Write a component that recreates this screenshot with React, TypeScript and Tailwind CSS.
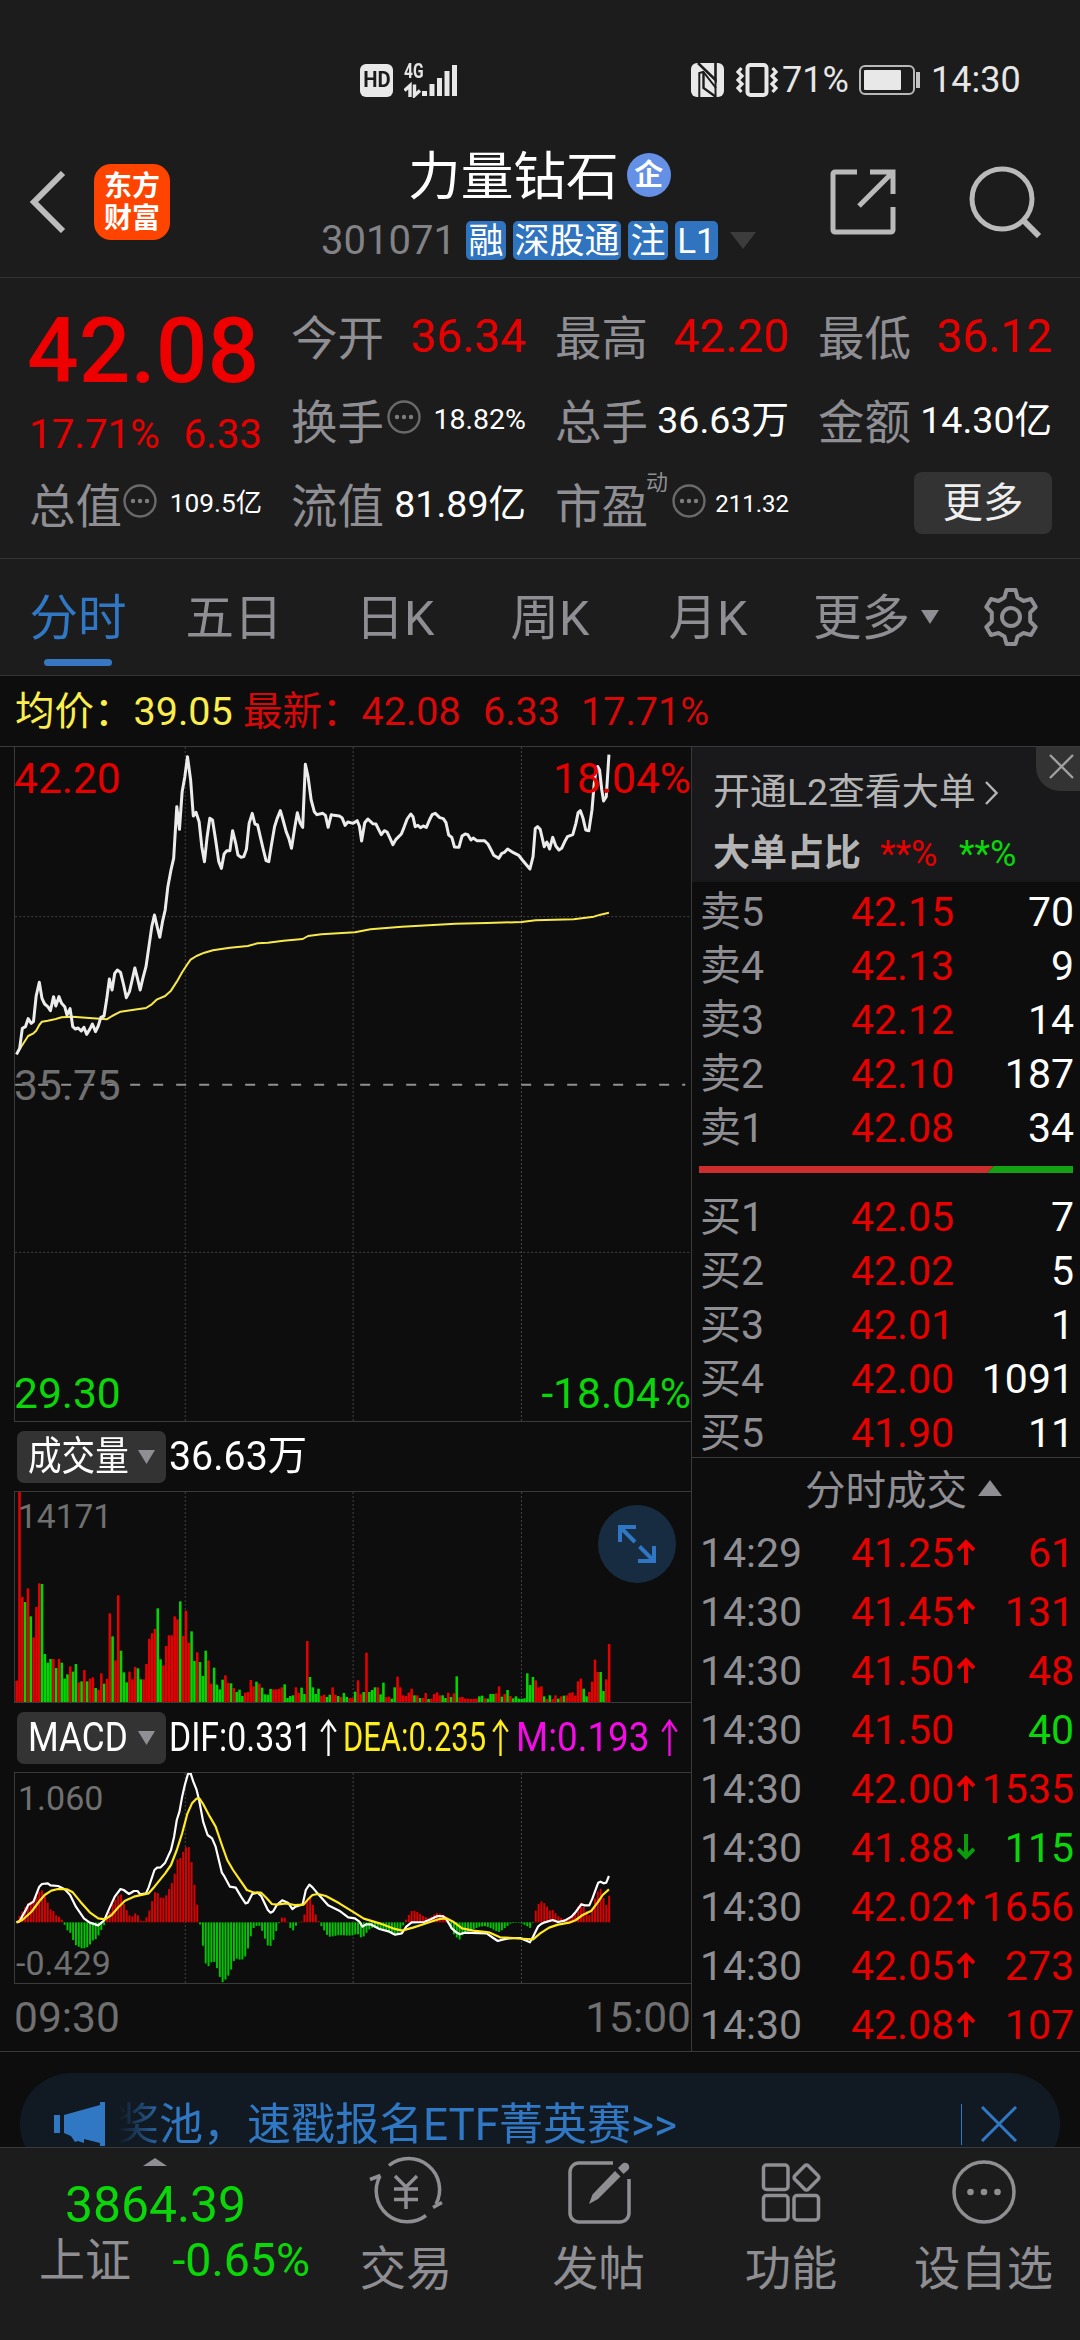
import React from "react";

const PRICE =
  "37,943 44,925 50,865 57,860 63,836 70,850 75,845 81,768 88,727 94,775 100,792 107,800 113,812 120,770 125,798 132,770 138,790 145,800 150,825 157,806 163,860 169,867 175,864 182,873 188,862 194,883 201,868 207,852 214,875 220,858 226,832 233,828 239,778 245,717 251,750 257,700 263,690 270,697 277,735 283,773 290,755 296,720 302,684 308,715 314,750 320,715 327,680 333,625 340,560 346,525 352,560 358,592 364,545 370,510 376,440 383,390 389,355 396,200 402,268 408,155 414,110 420,50 427,120 433,228 439,217 446,245 452,320 458,365 464,290 470,235 476,240 483,300 490,365 496,385 502,342 508,332 515,332 521,272 528,310 533,345 540,352 546,350 552,328 558,250 565,220 571,252 577,255 583,290 590,330 596,362 602,365 608,315 615,260 621,235 628,212 634,240 641,275 647,295 653,325 660,265 666,218 672,248 678,262 684,73 690,110 697,180 704,215 710,224 716,222 723,220 729,226 735,262 742,224 748,226 760,228 766,233 773,256 779,246 791,250 800,242 805,258 810,303 817,248 824,237 835,251 842,252 848,268 854,284 861,272 867,276 873,293 880,314 887,298 899,282 905,262 912,237 920,222 925,230 930,260 936,256 942,263 948,258 955,262 962,240 968,224 975,220 985,233 993,236 999,248 1005,285 1012,292 1018,321 1028,322 1035,288 1042,282 1048,284 1055,300 1060,294 1068,302 1085,302 1093,312 1100,330 1106,346 1117,355 1124,340 1130,337 1137,327 1150,338 1162,346 1170,360 1187,387 1194,350 1199,265 1204,260 1210,268 1219,320 1225,306 1231,327 1238,292 1245,318 1252,330 1258,325 1266,302 1271,290 1283,284 1290,250 1295,218 1300,212 1306,235 1312,270 1319,272 1326,210 1331,130 1335,90 1339,80 1343,90 1348,150 1352,183 1358,170 1364,44";

const AVERAGE =
  "37,943 50,915 63,888 75,880 81,872 88,855 94,845 107,842 125,837 138,832 163,830 200,834 239,838 251,828 270,815 300,809 327,804 340,793 352,778 370,768 383,752 396,725 408,697 420,672 427,659 440,648 458,638 477,631 515,623 555,618 577,610 600,608 635,602 678,597 690,588 720,583 795,577 830,568 900,560 960,556 1020,551 1090,549 1168,546 1200,541 1285,538 1330,530 1345,524 1364,518";

const VOLUME =
  "1022r 456r 771r 786g 745r 829g 892r 801r 730r 732g 942g 968g 957g 957r 984g 957r 968g 1016g 1003g 979r 995g 972g 1027r 1024g 990r 1024g 1016r 1012r 1044g 1049r 1000r 1031g 1017r 820r 889g 961r 766r 932g 997g 1027g 995r 1018r 981r 985g 1018g 1018r 972r 897r 880r 867r 805g 958g 976r 918r 886r 886r 829r 838r 784g 888r 812r 908r 874g 963g 937r 966g 1008g 932g 961r 1031r 983g 1034g 1048g 1019g 1006r 1029r 1030g 1044r 1056g 1049g 1068g 1058r 1056r 1020r 1039r 1025g 1031r 1043g 1063g 1064g 1047g 1048r 1048r 1047r 1042r 1033g 1074g 1068g 1066g 1042r 1059r 1043g 1062g 903r 1011g 1042g 1062g 1046g 1067r 1064r 1071g 1064g 1042r 1064r 1068g 1071r 1059g 1071g 1074r 1074r 1055g 1021r 1062r 1056g 938r 1056g 1050g 1042g 1042r 1063g 1028g 1071r 1070r 1076g 1042g 1010r 1042r 1066r 1068r 1058r 1046r 1066g 1066r 1074g 1074r 1059r 1077g 1076r 1062r 1057r 1066r 1066g 1074g 1058r 1071g 1060r 1009g 1072r 1071r 1076r 1076r 1077r 1077r 1076r 1069g 1067g 1075r 1076g 1062g 1062g 1060r 1039r 1070g 1062r 1050g 1068r 1075g 1069g 1076g 1077g 1075g 1000g 1035g 1011g 1021r 1042r 1039r 1069g 1077r 1066g 1077r 1066r 1076g 1069r 1067g 1066r 1059r 1057r 1067r 1024r 1016r 1046g 1069g 1056r 1025r 959r 996r 996g 1053g 1018r 912r";

const DIF =
  "37,667 44,664 50,648 57,632 63,615 75,605 88,560 94,552 107,550 113,556 130,558 145,568 157,585 170,620 188,655 201,668 220,676 233,662 245,625 257,590 270,567 277,570 289,582 300,573 308,573 314,583 327,580 333,562 346,510 352,503 360,502 370,488 383,450 390,410 396,360 402,335 408,290 414,255 421,222 427,220 433,245 440,268 446,300 455,365 465,405 475,415 483,440 497,518 503,530 515,560 528,563 540,590 550,610 555,608 565,582 577,578 585,588 600,630 606,638 612,634 620,615 632,601 645,608 655,627 662,620 678,613 685,570 693,554 700,562 708,575 722,596 735,616 760,632 780,652 795,655 805,665 812,680 820,673 830,673 850,687 870,694 885,704 900,700 910,680 922,667 950,666 965,658 980,648 993,649 1000,658 1012,685 1022,697 1030,703 1040,698 1090,700 1105,714 1115,723 1128,718 1140,715 1165,714 1187,727 1194,710 1205,680 1212,672 1220,667 1238,660 1250,666 1265,662 1280,650 1290,635 1302,613 1310,616 1320,616 1327,595 1340,548 1345,545 1352,550 1358,548 1364,528";

const DEA =
  "37,667 50,660 70,636 88,604 100,585 115,572 130,567 150,568 163,577 180,605 201,637 220,655 235,658 250,645 265,622 280,602 300,590 320,584 333,580 346,560 370,520 383,495 396,450 408,400 420,340 430,310 440,296 447,296 455,312 470,350 483,380 497,435 509,480 522,510 540,545 553,570 570,578 585,578 597,594 609,612 620,614 640,610 660,615 680,614 690,598 700,585 712,582 730,588 760,610 790,635 815,656 850,670 880,685 900,692 925,683 950,672 970,663 985,657 1000,655 1015,665 1035,685 1060,692 1095,697 1120,712 1150,714 1180,717 1194,718 1210,700 1230,683 1250,674 1275,668 1290,660 1305,645 1325,632 1340,605 1350,585 1364,568";

const HIST: number[][] =
  "37,667 43,650 50,635 62,610 69,605 75,600 81,592 88,575 94,570 100,588 107,608 113,628 119,632 125,645 132,650 138,658 144,672 150,690 157,697 163,718 169,735 176,740 182,745 188,745 195,742 201,735 207,722 214,718 220,708 226,692 232,680 239,655 245,640 251,615 258,600 264,588 270,578 277,610 283,628 289,645 295,652 302,640 308,642 314,662 321,664 327,655 333,638 340,607 346,577 352,575 358,592 365,594 371,590 377,572 384,552 390,533 396,478 402,480 409,458 415,445 421,432 427,462 434,540 440,598 446,652 453,722 459,785 465,803 471,790 478,782 484,795 490,822 497,848 503,843 509,830 515,822 522,787 528,775 534,778 541,780 547,775 553,760 560,720 566,685 572,682 578,672 585,685 591,706 597,730 603,744 610,730 616,704 622,680 629,655 635,649 641,658 648,676 654,696 660,685 666,669 673,664 679,666 685,620 691,582 698,600 704,630 710,655 717,672 723,685 729,697 735,710 742,710 760,705 780,707 792,706 800,700 811,716 817,705 830,684 848,682 855,690 867,690 880,700 890,702 899,690 905,670 911,655 918,640 924,630 937,637 950,650 962,654 974,642 981,638 993,645 1000,650 1006,675 1012,690 1018,706 1025,715 1031,720 1037,702 1044,697 1056,690 1075,680 1088,678 1100,685 1113,694 1119,696 1132,683 1144,670 1163,667 1176,675 1188,684 1194,668 1200,632 1207,610 1213,604 1220,610 1232,632 1238,630 1250,648 1258,655 1270,660 1289,640 1295,620 1302,607 1308,622 1320,646 1327,622 1333,595 1339,575 1345,565 1352,595 1358,615 1364,587"
    .split(" ")
    .map((p) => p.split(",").map(Number));

const histAt = (x: number) => {
  for (let i = 1; i < HIST.length; i++) {
    const [x0, y0] = HIST[i - 1];
    const [x1, y1] = HIST[i];
    if (x <= x1) return y0 + ((y1 - y0) * Math.max(0, x - x0)) / (x1 - x0);
  }
  return HIST[HIST.length - 1][1];
};

const STEP = 6.319;
const RED = "#e60000";
const GREEN = "#00d600";

function Grid({ y0, y1, rows = [] }: { y0: number; y1: number; rows?: number[] }) {
  return (
    <g stroke="#434343" strokeDasharray="2 2" fill="none">
      {[415, 791, 1168].map((x) => (
        <line key={x} x1={x} x2={x} y1={y0} y2={y1} vectorEffect="non-scaling-stroke" />
      ))}
      {rows.map((y) => (
        <line key={y} x1={34} x2={1547} y1={y} y2={y} vectorEffect="non-scaling-stroke" />
      ))}
    </g>
  );
}

function PriceChart() {
  return (
    <div className="relative ml-[14px] h-[675px] border-b border-l border-[#3a3a3a]">
      <svg className="block h-[674px] w-[676px]" viewBox="33.6 21 1514.2 2022" preserveAspectRatio="none" fill="none">
        <Grid y0={21} y1={2043} rows={[530, 1537]} />
        <line x1={34} x2={1535} y1={1034} y2={1034} stroke="#909090" strokeWidth={2} strokeDasharray="10 13" vectorEffect="non-scaling-stroke" />
        <polyline points={AVERAGE} stroke="#f7e94b" strokeWidth={2} strokeLinejoin="round" vectorEffect="non-scaling-stroke" />
        <polyline points={PRICE} stroke="#ececec" strokeWidth={3} strokeLinejoin="round" vectorEffect="non-scaling-stroke" />
      </svg>
      <span className="absolute -left-px top-[11px] text-[42.5px] leading-[42px] text-[#e60000]">42.20</span>
      <span className="absolute right-0 top-[11px] text-[42.5px] leading-[42px] text-[#e60000]">18.04%</span>
      <span className="absolute -left-px top-[318px] text-[42.5px] leading-[42px] text-[#707070]">35.75</span>
      <span className="absolute -left-px top-[626px] text-[42.5px] leading-[42px] text-[#0ad60a]">29.30</span>
      <span className="absolute right-0 top-[626px] text-[42.5px] leading-[42px] text-[#0ad60a]">-18.04%</span>
    </div>
  );
}

function VolumeChart() {
  return (
    <div className="relative ml-[14px] h-[212px] border-y border-l border-[#3a3a3a]">
      <svg className="block h-[210px] w-[676px]" viewBox="33.6 456 1514.2 630" preserveAspectRatio="none" fill="none">
        <Grid y0={456} y1={1086} />
        {VOLUME.split(" ").map((v, i) => {
          const top = parseInt(v);
          return <rect key={i} x={37.4 + STEP * i - 2.9} y={top} width={5.7} height={1086 - top} fill={v.endsWith("r") ? RED : GREEN} />;
        })}
      </svg>
      <span className="absolute left-[3px] top-[6px] text-[33.5px] leading-[38px] text-[#707070]">14171</span>
      <div className="absolute left-[583px] top-[13px] flex h-[78px] w-[78px] items-center justify-center rounded-full bg-[#172b41]">
        <svg className="h-[38px] w-[38px]" viewBox="0 0 38 38" fill="none" stroke="#2f77c4" strokeWidth="4">
          <path d="M2 17V2h16M2 2l15 15M36 21v15H20M36 36L21.500 21.500" />
        </svg>
      </div>
    </div>
  );
}

function MacdChart() {
  return (
    <div className="relative ml-[14px] h-[212px] border-y border-l border-[#3a3a3a]">
      <svg className="block h-[210px] w-[676px]" viewBox="33.6 219 1514.2 630" preserveAspectRatio="none" fill="none">
        <Grid y0={219} y1={849} />
        {Array.from({ length: 211 }, (_, i) => {
          const x = 37.4 + STEP * i;
          const y = histAt(x);
          return <rect key={i} x={x - 2.2} y={Math.min(y, 667)} width={4.4} height={Math.max(1.5, Math.abs(y - 667))} fill={y < 667 ? "#dc0000" : "#00c400"} />;
        })}
        <polyline points={DIF} stroke="#fff" strokeWidth={2.2} strokeLinejoin="round" vectorEffect="non-scaling-stroke" />
        <polyline points={DEA} stroke="#ffe921" strokeWidth={2.2} strokeLinejoin="round" vectorEffect="non-scaling-stroke" />
      </svg>
      <span className="absolute left-[3px] top-[6px] text-[34px] leading-[38px] text-[#707070]">1.060</span>
      <span className="absolute left-px top-[171px] text-[34px] leading-[38px] text-[#707070]">-0.429</span>
    </div>
  );
}

function Picker({ children }: { children: React.ReactNode }) {
  return (
    <div className="ml-[17px] flex h-[52px] w-[149px] items-center rounded-[7px] bg-[#333] pl-[11px]">
      <div className="w-[110px] whitespace-nowrap text-[40px] leading-[52px] text-white">{children}</div>
      <svg className="h-[14px] w-[17px]" viewBox="0 0 17 14" fill="#8f8f94">
        <path d="M0 0h17L8.500 14z" />
      </svg>
    </div>
  );
}

function TallArrow() {
  return (
    <svg className="h-[37px] w-[17px] shrink-0" viewBox="0 0 17 38" fill="none" stroke="currentColor" strokeWidth="2.400">
      <path d="M8.500 38V2M1 13L8.500 2 16 13" />
    </svg>
  );
}

function Dots({ className = "" }: { className?: string }) {
  return (
    <svg className={"h-[34px] w-[34px] shrink-0 " + className} viewBox="0 0 34 34" fill="none" stroke="#6a6a6a" strokeWidth="2.400">
      <circle cx="17" cy="17" r="15.500" />
      <g fill="#7d7d80" stroke="none">
        <circle cx="10" cy="17" r="2.200" />
        <circle cx="17" cy="17" r="2.200" />
        <circle cx="24" cy="17" r="2.200" />
      </g>
    </svg>
  );
}

const LABEL = "pt-[5px] text-[46.5px] leading-[60px] text-[#8e8e93]";

function StatusBar() {
  return (
    <div className="flex h-[100px] items-center pt-[60px] text-[36px] leading-[40px] text-[#e6e6e6]">
      <div className="ml-[360px] flex h-[33px] w-[33px] items-center justify-center rounded-[6px] bg-[#e8e8e8] text-[22px] font-bold leading-none text-[#1c1c1c]">
        <span className="scale-x-[0.92]">HD</span>
      </div>
      <div className="relative ml-[11px] h-[36px] w-[54px]">
        <span className="absolute left-0 top-0 origin-left scale-x-[0.74] text-[21px] font-bold leading-[18px]">4G</span>
        <svg className="h-[36px] w-[54px]" viewBox="0 0 54 36" fill="none" stroke="#e8e8e8">
          <path d="M20.500 34v-5M28 34V22M35.500 34V16M43 34V9M50.500 34V3" strokeWidth="5" strokeLinecap="butt" />
          <path d="M6 35V23.500L0.500 28.500M10.500 22.500V33.500L16 28.500" strokeWidth="3.400" />
        </svg>
      </div>
      <svg className="ml-[233px] h-[34px] w-[33px]" viewBox="0 0 33 34">
        <rect width="33" height="34" rx="6" fill="#e8e8e8" />
        <path d="M8.300 34V10l4-1 12.700 16" fill="none" stroke="#1c1c1c" strokeWidth="2" />
        <path d="M7 0l17.500 17V0" fill="none" stroke="#1c1c1c" strokeWidth="2.600" />
        <path d="M12.500 9v16L25 34" fill="none" stroke="#1c1c1c" strokeWidth="2.400" />
        <path d="M24.500 16v18" fill="none" stroke="#1c1c1c" strokeWidth="2" />
      </svg>
      <svg className="ml-[12px] h-[34px] w-[42px]" viewBox="0 0 42 34" fill="none" stroke="#e8e8e8">
        <rect x="11.500" y="2" width="19" height="30" rx="3" strokeWidth="4" />
        <path d="M5.500 5L2 9l4 4-4 4 4 4-4 4 3.500 4M36.500 5L40 9l-4 4 4 4-4 4 4 4-3.500 4" strokeWidth="3.200" />
      </svg>
      <span className="ml-[4px] w-[77px]">71%</span>
      <svg className="h-[30px] w-[62px]" viewBox="0 0 62 30" fill="none" stroke="#b8b8b8" strokeWidth="2">
        <rect x="1" y="1" width="54" height="28" rx="5" />
        <rect x="5" y="5" width="37" height="20" rx="1" fill="#e8e8e8" stroke="none" />
        <path d="M59 7v16" strokeWidth="4" stroke="#c4c4c4" />
      </svg>
      <span className="ml-[10px]">14:30</span>
    </div>
  );
}

function Tag({ className, children }: { className: string; children: React.ReactNode }) {
  return (
    <span className={"flex h-[39px] items-center justify-center whitespace-nowrap rounded-[5px] bg-[#3074c0] pt-px text-[35px] leading-none text-white " + className}>
      {children}
    </span>
  );
}

function Header() {
  return (
    <div className="flex h-[178px] border-b border-[#333]">
      <svg className="ml-[29px] mt-[71px] h-[62px] w-[37px]" viewBox="0 0 37 62" fill="none" stroke="#bcbcbc" strokeWidth="6">
        <path d="M34 2L5 31l29 29" />
      </svg>
      <div className="ml-[28px] mt-[64px] flex h-[76px] w-[76px] flex-col items-center justify-center rounded-[17px] bg-[#ff4400] pt-[2px] text-[28px] font-bold leading-[32px] text-white">
        <span>东方</span>
        <span>财富</span>
      </div>
      <div className="ml-[151px] w-[440px]">
        <div className="mt-[45px] flex h-[60px] items-center pl-[87px]">
          <span className="pt-[4px] text-[52.7px] leading-[60px] text-white">力量钻石</span>
          <span className="ml-[8px] flex h-[44px] w-[44px] items-center justify-center rounded-full bg-[#6490e6] text-[29px] font-bold leading-none text-white">企</span>
        </div>
        <div className="mt-[16px] flex h-[39px] items-center">
          <span className="w-[145px] pt-px text-[40px] text-[#828287]">301071</span>
          <Tag className="w-[40px]">融</Tag>
          <Tag className="ml-[7px] w-[108px]">深股通</Tag>
          <Tag className="ml-[7px] w-[40px]">注</Tag>
          <Tag className="ml-[7px] w-[43px]">L1</Tag>
          <svg className="ml-[12px] h-[17px] w-[26px]" viewBox="0 0 26 17" fill="#3c3c3c">
            <path d="M0 0h26L13 17z" />
          </svg>
        </div>
      </div>
      <svg className="ml-[68px] mt-[68px] h-[68px] w-[68px]" viewBox="0 0 68 68" fill="none" stroke="#bababa" strokeWidth="5">
        <path d="M28 4H6a2 2 0 0 0-2 2v56a2 2 0 0 0 2 2h56a2 2 0 0 0 2-2V39M41 4h23v22M64 4L30 38" />
      </svg>
      <svg className="ml-[71px] mt-[66px] h-[72px] w-[74px]" viewBox="0 0 74 72" fill="none" stroke="#bababa" strokeWidth="5">
        <circle cx="34" cy="33" r="30" />
        <path d="M54 53l17 17" strokeWidth="6" />
      </svg>
    </div>
  );
}

function Quote() {
  return (
    <div className="flex h-[281px] gap-[29px] border-b border-[#333] pl-[30px] pt-[16px] text-white">
      <div className="w-[232px]">
        <div className="-ml-[3px] flex h-[114px] items-center text-[91px] font-medium leading-none text-[#ee0000]">42.08</div>
        <div className="-ml-px flex h-[54px] items-center justify-between text-[40.3px] text-[#e60000]">
          <span>17.71%</span>
          <span>6.33</span>
        </div>
        <div className="-ml-px flex h-[84px] items-center">
          <span className={LABEL}>总值</span>
          <Dots className="-mt-[7px] ml-px" />
          <span className="ml-auto text-[26.3px]">109.5亿</span>
        </div>
      </div>
      <div className="w-[235px]">
        <div className="flex h-[84px] items-center justify-between">
          <span className={LABEL}>今开</span>
          <span className="text-[46px] text-[#e60000]">36.34</span>
        </div>
        <div className="flex h-[84px] items-center">
          <span className={LABEL}>换手</span>
          <Dots className="-mt-[7px] ml-[3px]" />
          <span className="ml-auto text-[28.5px]">18.82%</span>
        </div>
        <div className="flex h-[84px] items-center justify-between">
          <span className={LABEL}>流值</span>
          <span className="pt-px text-[37.5px]">81.89亿</span>
        </div>
      </div>
      <div className="w-[234px]">
        <div className="flex h-[84px] items-center justify-between">
          <span className={LABEL}>最高</span>
          <span className="text-[46px] text-[#e60000]">42.20</span>
        </div>
        <div className="flex h-[84px] items-center justify-between">
          <span className={LABEL}>总手</span>
          <span className="pt-px text-[37.5px]">36.63万</span>
        </div>
        <div className="flex h-[84px] items-center">
          <span className={LABEL}>市盈</span>
          <span className="-ml-[2px] -mt-[44px] text-[22px] text-[#8e8e93]">动</span>
          <Dots className="-mt-[7px] ml-[4px]" />
          <span className="ml-auto text-[24px]">211.32</span>
        </div>
      </div>
      <div className="w-[234px]">
        <div className="flex h-[84px] items-center justify-between">
          <span className={LABEL}>最低</span>
          <span className="text-[46px] text-[#e60000]">36.12</span>
        </div>
        <div className="flex h-[84px] items-center justify-between">
          <span className={LABEL}>金额</span>
          <span className="pt-px text-[37.5px]">14.30亿</span>
        </div>
        <div className="flex h-[84px] items-center justify-end">
          <div className="-mt-[3px] flex h-[62px] w-[138px] items-center justify-center rounded-[8px] bg-[#333] pt-px text-[40.5px] text-[#eee]">更多</div>
        </div>
      </div>
    </div>
  );
}

function Gear() {
  return (
    <svg className="ml-[42px] h-[60px] w-[60px]" viewBox="0 0 60 60" fill="none" stroke="#8e8e93" strokeWidth="4" strokeLinejoin="round">
      <path d="M25.500 3h9l2 7.500 6 3.500 7.500-2 4.700 8-5.500 5.500v9l5.500 5.500-4.700 8-7.500-2-6 3.500-2 7.500h-9l-2-7.500-6-3.500-7.500 2-4.700-8 5.500-5.500v-9l-5.500-5.500 4.700-8 7.500 2 6-3.500z" />
      <circle cx="30" cy="30" r="9" />
    </svg>
  );
}

function Tabs() {
  return (
    <div className="flex h-[117px] items-center border-b border-[#333] text-[48.5px] text-[#8e8e93]">
      <div className="relative flex h-full w-[156px] items-center justify-center pt-[5px] text-[#3078c5]">
        分时
        <span className="absolute bottom-[9px] left-[44px] h-[7px] w-[68px] rounded-full bg-[#3676c2]" />
      </div>
      <span className="w-[156px] pt-[5px] text-center">五日</span>
      <span className="w-[166px] pt-[5px] text-center">日K</span>
      <span className="w-[144px] pt-[5px] text-center">周K</span>
      <span className="w-[172px] pt-[5px] text-center">月K</span>
      <span className="ml-[19px] w-[108px] pt-[5px]">更多</span>
      <svg className="h-[14px] w-[18px]" viewBox="0 0 18 14" fill="#8e8e93">
        <path d="M0 0h18L9 14z" />
      </svg>
      <Gear />
    </div>
  );
}

const SELL = [
  ["卖5", "42.15", "70"],
  ["卖4", "42.13", "9"],
  ["卖3", "42.12", "14"],
  ["卖2", "42.10", "187"],
  ["卖1", "42.08", "34"],
];
const BUY = [
  ["买1", "42.05", "7"],
  ["买2", "42.02", "5"],
  ["买3", "42.01", "1"],
  ["买4", "42.00", "1091"],
  ["买5", "41.90", "11"],
];
const TRADES = [
  ["14:29", "41.25", "u", "61", "r"],
  ["14:30", "41.45", "u", "131", "r"],
  ["14:30", "41.50", "u", "48", "r"],
  ["14:30", "41.50", "", "40", "g"],
  ["14:30", "42.00", "u", "1535", "r"],
  ["14:30", "41.88", "d", "115", "g"],
  ["14:30", "42.02", "u", "1656", "r"],
  ["14:30", "42.05", "u", "273", "r"],
  ["14:30", "42.08", "u", "107", "r"],
];

function OrderRow({ row }: { row: string[] }) {
  return (
    <div className="flex h-[54px] shrink-0 items-center pl-[8px] pr-[6px] text-[41px] leading-[54px]">
      <span className="w-[151px] text-[#8e8e93]">{row[0]}</span>
      <span className="text-[#e60000]">{row[1]}</span>
      <span className="ml-auto text-white">{row[2]}</span>
    </div>
  );
}

function SidePanel() {
  return (
    <div className="flex h-[1304px] w-[389px] flex-col overflow-hidden border-l border-[#3a3a3a]">
      <div className="relative h-[135px] shrink-0 bg-[#19191b] pl-[21px] text-[#b4b4b4]">
        <div className="flex h-[64px] items-center pt-[27px] text-[37px]">
          开通L2查看大单
          <svg className="ml-[9px] h-[24px] w-[13px]" viewBox="0 0 13 24" fill="none" stroke="#b4b4b4" strokeWidth="2.400">
            <path d="M1 1l10.500 11L1 23" />
          </svg>
        </div>
        <div className="mt-[18px] flex h-[50px] items-center">
          <span className="w-[167px] text-[37px] font-bold">大单占比</span>
          <span className="w-[79px] text-[36px] text-[#e60000]">**%</span>
          <span className="text-[36px] text-[#0ad60a]">**%</span>
        </div>
        <div className="absolute right-0 top-0 flex h-[44px] w-[44px] items-start rounded-bl-[24px] bg-[#333] pl-[13px] pt-[7px]">
          <svg className="h-[25px] w-[25px]" viewBox="0 0 25 25" fill="none" stroke="#a0a0a0" strokeWidth="2.400">
            <path d="M1 1l23 23M24 1L1 24" />
          </svg>
        </div>
      </div>
      <div className="flex flex-col pt-[3px]">
        {SELL.map((r) => (
          <OrderRow key={r[0]} row={r} />
        ))}
      </div>
      <svg className="ml-[7px] mt-[11px] block h-[7px] w-[374px] shrink-0" viewBox="0 0 374 7">
        <path d="M0 0h295l-7 7H0z" fill="#cc2e2e" />
        <path d="M295 0h79v7h-86z" fill="#14a214" />
      </svg>
      <div className="mt-[17px] flex h-[268px] shrink-0 flex-col border-b border-[#3a3a3a]">
        {BUY.map((r) => (
          <OrderRow key={r[0]} row={r} />
        ))}
      </div>
      <div className="flex h-[66px] shrink-0 items-center pl-[113px] pt-px text-[40.5px] text-[#8e8e93]">
        分时成交
        <svg className="-mt-[7px] ml-[11px] h-[16px] w-[24px]" viewBox="0 0 24 16" fill="#8e8e93">
          <path d="M0 16h24L12 0z" />
        </svg>
      </div>
      {TRADES.map((t, i) => (
        <div key={i} className="flex h-[59px] shrink-0 items-center pl-[8px] pr-[6px] text-[41px] leading-[59px]">
          <span className="w-[151px] text-[#8e8e93]">{t[0]}</span>
          <span className="w-[106px] text-[#e60000]">{t[1]}</span>
          {t[2] && (
            <svg className="-mt-[4px] h-[26px] w-[18px]" viewBox="0 0 18 26" fill="none" stroke={t[2] === "u" ? "#ee0000" : "#0a9c0a"} strokeWidth="4">
              <path d={t[2] === "u" ? "M9 26V3M1 11l8-8 8 8" : "M9 0v23M1 15l8 8 8-8"} />
            </svg>
          )}
          <span className={t[4] === "r" ? "ml-auto text-[#e60000]" : "ml-auto text-[#0ad60a]"}>{t[3]}</span>
        </div>
      ))}
    </div>
  );
}

function Banner() {
  return (
    <div className="h-[95px] overflow-hidden pt-[21px]">
      <div className="mx-[20px] flex h-[102px] items-center rounded-full bg-[#111a23] pl-[34px] text-[#3078c4]">
        <svg className="h-[44px] w-[51px]" viewBox="0 0 51 44" fill="#3078c4">
          <path d="M0 13h6v18H0zM10 13L46 3V0h5v44h-5v-3l-16-4v4l-6-2-3 1-4-6-7-3z" />
        </svg>
        <div className="ml-[14px] w-[842px] overflow-hidden whitespace-nowrap pt-[2px] text-[44px] leading-[56px] [mask-image:linear-gradient(to_right,transparent,black_50px)]">
          <span className="-ml-[4px]">奖池，速戳报名ETF菁英赛&gt;&gt;</span>
        </div>
        <span className="h-[41px] w-px bg-[#3078c4]" />
        <svg className="ml-[19px] h-[36px] w-[36px]" viewBox="0 0 36 36" fill="none" stroke="#3078c4" strokeWidth="3">
          <path d="M1 1l34 34M35 1L1 35" />
        </svg>
      </div>
    </div>
  );
}

function NavItem({ className, label, children }: { className: string; label: string; children: React.ReactNode }) {
  return (
    <div className={"flex flex-col items-center pt-[6px] " + className}>
      <svg className="h-[76px] w-[76px]" viewBox="0 0 76 76" fill="none" stroke="#8e8e93" strokeWidth="3.500">
        {children}
      </svg>
      <span className="mt-[11px] whitespace-nowrap text-[46.3px] leading-[56px] text-[#8e8e93]">{label}</span>
    </div>
  );
}

function BottomBar() {
  return (
    <div className="flex h-[194px] border-t border-[#3a3a3a] bg-[#1c1c1c]">
      <div className="w-[310px]">
        <svg className="ml-[143px] mt-[10px] block h-[8px] w-[24px]" viewBox="0 0 24 8" fill="#8e8e93">
          <path d="M0 8h24L12 0z" />
        </svg>
        <div className="mt-[10px] h-[58px] pl-[65px] text-[49.8px] leading-[58px] text-[#0ad60a]">3864.39</div>
        <div className="-mt-px flex h-[54px] items-center pl-[39px] leading-[54px]">
          <span className="w-[134px] text-[46px] text-[#8e8e93]">上证</span>
          <span className="text-[46.5px] text-[#0ad60a]">-0.65%</span>
        </div>
      </div>
      <NavItem className="w-[192px]" label="交易">
        <path d="M21 11.500A31 31 0 0 1 68 50M65 53.500l9-5" />
        <path d="M58 61.500A31 31 0 0 1 12 22M2 25.500l10.500-4" />
        <path d="M27 22l11 11 11-11M38 33v22M26 35h24M26 45.500h24" />
      </NavItem>
      <NavItem className="w-[193px]" label="发帖">
        <path d="M52 9H18a9 9 0 0 0-9 9v41a9 9 0 0 0 9 9h41a9 9 0 0 0 9-9V25" />
        <path d="M54 17l5.500 5.500L37 45l-9 5 3.500-9.500zM57 14l4-4a3.500 3.500 0 0 1 6 6l-4.500 4z" fill="#8e8e93" stroke="none" />
      </NavItem>
      <NavItem className="w-[192px]" label="功能">
        <rect x="10.500" y="11" width="24.500" height="24.500" rx="3" />
        <rect x="10.500" y="41.500" width="24.500" height="24.500" rx="3" />
        <rect x="41" y="41.500" width="24.500" height="24.500" rx="3" />
        <rect x="44" y="14" width="19" height="19" rx="2.500" transform="rotate(45 53.500 23.500)" />
      </NavItem>
      <NavItem className="w-[193px]" label="设自选">
        <circle cx="38" cy="38" r="30" />
        <g fill="#8e8e93" stroke="none">
          <circle cx="24.500" cy="38" r="3.300" />
          <circle cx="38" cy="38" r="3.300" />
          <circle cx="51.500" cy="38" r="3.300" />
        </g>
      </NavItem>
    </div>
  );
}

export default function App() {
  return (
    <div className="h-[2340px] w-[1080px] overflow-hidden bg-[#0d0d0d] font-[Roboto,'Noto_Sans_CJK_SC',sans-serif]">
      <div className="bg-[#1c1c1c]">
        <StatusBar />
        <Header />
        <Quote />
        <Tabs />
      </div>
      <div className="flex h-[71px] items-center border-b border-[#3a3a3a] pl-[15px] pt-px text-[39.5px] text-[#d90808]">
        <span className="w-[228px] whitespace-nowrap text-[#fbee4c]">均价：39.05</span>
        <span className="w-[240px] whitespace-nowrap">最新：42.08</span>
        <span className="w-[98px]">6.33</span>
        <span>17.71%</span>
      </div>
      <div className="flex h-[1305px] border-b border-[#3a3a3a]">
        <div className="w-[691px]">
          <PriceChart />
          <div className="flex h-[69px] items-center">
            <Picker>
              <span className="inline-block origin-left scale-x-[0.84]">成交量</span>
            </Picker>
            <span className="ml-[3px] origin-left scale-x-[0.96] text-[41px] text-white">36.63万</span>
          </div>
          <VolumeChart />
          <div className="flex h-[69px] items-center text-[40px]">
            <Picker>
              <span className="inline-block origin-left scale-x-[0.88]">MACD</span>
            </Picker>
            <div className="ml-[3px] flex w-[174px] items-center text-white">
              <span className="w-[151px] origin-left scale-x-[0.845]">DIF:0.331</span>
              <TallArrow />
            </div>
            <div className="flex w-[173px] items-center text-[#ffee1e]">
              <span className="w-[149px] origin-left scale-x-[0.772]">DEA:0.235</span>
              <TallArrow />
            </div>
            <div className="flex items-center text-[#f70ae8]">
              <span className="w-[145px] origin-left scale-x-[0.92]">M:0.193</span>
              <TallArrow />
            </div>
          </div>
          <MacdChart />
          <div className="flex h-[67px] items-center justify-between pl-[14px] pt-px text-[42.5px] text-[#707070]">
            <span>09:30</span>
            <span>15:00</span>
          </div>
        </div>
        <SidePanel />
      </div>
      <Banner />
      <BottomBar />
    </div>
  );
}
